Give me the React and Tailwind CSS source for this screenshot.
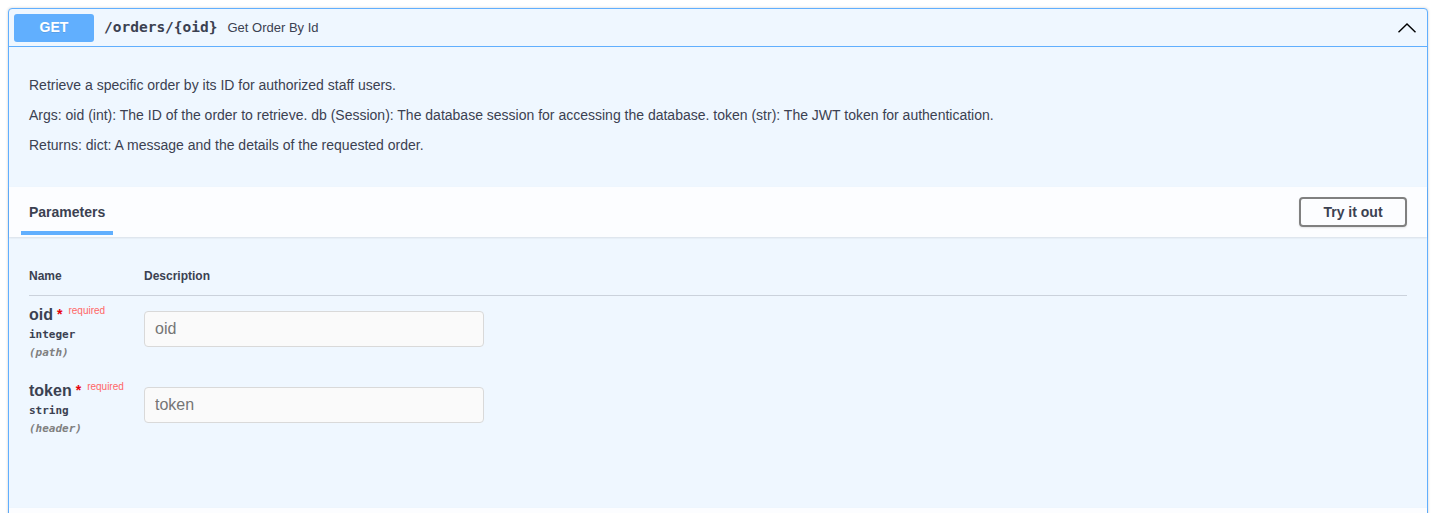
export default function App() {
  const sans = { fontFamily: '"Liberation Sans", Arial, sans-serif' };
  const mono = { fontFamily: '"DejaVu Sans Mono", "Liberation Mono", monospace' };
  const params = [
    { name: "oid", type: "integer", loc: "(path)" },
    { name: "token", type: "string", loc: "(header)" },
  ];
  return (
    <div className="h-[513px] overflow-hidden bg-white pt-2 pl-2 pr-[10px] text-[#3b4151]" style={sans}>
      <div className="rounded-[4px] border border-[#61affe] bg-[#eff7ff] shadow-[0_0_3px_rgba(0,0,0,0.19)]">
        {/* summary */}
        <div className="flex h-[38px] items-center border-b border-[#61affe] px-[5px]">
          <div className="flex h-[28px] w-[80px] items-center justify-center rounded-[3px] bg-[#61affe] text-[14px] font-bold text-white [text-shadow:0_1px_0_rgba(0,0,0,0.1)]">
            GET
          </div>
          <div className="px-[10px] text-[14.5px] font-bold text-[#3b4151]" style={mono}>
            /orders/{"{oid}"}
          </div>
          <div className="text-[13px] text-[#3b4151]">Get Order By Id</div>
          <div className="ml-auto mr-[5px] flex items-center">
            <svg width="20" height="20" viewBox="0 0 20 20">
              <path
                d="M1.5 14.2 L10 6 L18.5 14.2"
                fill="none"
                stroke="#000"
                strokeWidth="1.4"
              />
            </svg>
          </div>
        </div>

        {/* description */}
        <div className="flex flex-col gap-[13px] px-5 pt-[30px] pb-[33px] text-[14px] leading-[17px]">
          <p>Retrieve a specific order by its ID for authorized staff users.</p>
          <p>
            Args: oid (int): The ID of the order to retrieve. db (Session): The database session for accessing the database. token (str): The JWT token for authentication.
          </p>
          <p>Returns: dict: A message and the details of the requested order.</p>
        </div>

        {/* section header */}
        <div className="flex h-[50px] items-center bg-[#fcfdff] pl-3 pr-5 shadow-[0_1px_2px_rgba(0,0,0,0.1)]">
          <div className="relative flex h-full items-center px-2">
            <span className="text-[14px] font-bold">Parameters</span>
            <div className="absolute bottom-[2px] left-0 right-0 h-[4px] bg-[#61affe]" />
          </div>
          <button className="ml-auto h-[30px] w-[108px] rounded-[4px] border-2 border-[#808080] bg-transparent text-[14px] font-bold text-[#3b4151] shadow-[0_1px_2px_rgba(0,0,0,0.1)]">
            Try it out
          </button>
        </div>

        {/* parameters table */}
        <div className="px-5 pt-5 pb-[60px]">
          <div className="flex border-b border-[rgba(59,65,81,0.2)] py-3 text-[12px] font-bold leading-[14px]">
            <div className="w-[115px]">Name</div>
            <div>Description</div>
          </div>
          {params.map((p) => (
            <div key={p.name} className="flex py-[10px]">
              <div className="w-[115px]">
                <div className="flex items-start text-[16px] font-bold leading-[18px]">
                  <span>{p.name}</span>
                  <span className="ml-[4px] mt-[1px] text-[14px] leading-[14px] text-red-600">*</span>
                  <span className="ml-[6px] -mt-[1px] text-[10px] font-normal leading-[12px] text-[#f66]">required</span>
                </div>
                <div className="mt-[2px] text-[11px] font-semibold leading-[18px]" style={mono}>
                  {p.type}
                </div>
                <div className="text-[11px] font-semibold italic leading-[18px] text-[#808080]" style={mono}>
                  {p.loc}
                </div>
              </div>
              <div className="py-[5px]">
                <input
                  placeholder={p.name}
                  className="h-[36px] w-[340px] rounded-[4px] border border-[#d9d9d9] bg-[#fafafa] px-[10px] text-[16px] text-[#3b4151] placeholder:text-[#757575]"
                  style={sans}
                />
              </div>
            </div>
          ))}
        </div>

        {/* next section header strip */}
        <div className="h-[50px] bg-[#fcfdff] shadow-[0_1px_2px_rgba(0,0,0,0.1)]" />
      </div>
    </div>
  );
}
